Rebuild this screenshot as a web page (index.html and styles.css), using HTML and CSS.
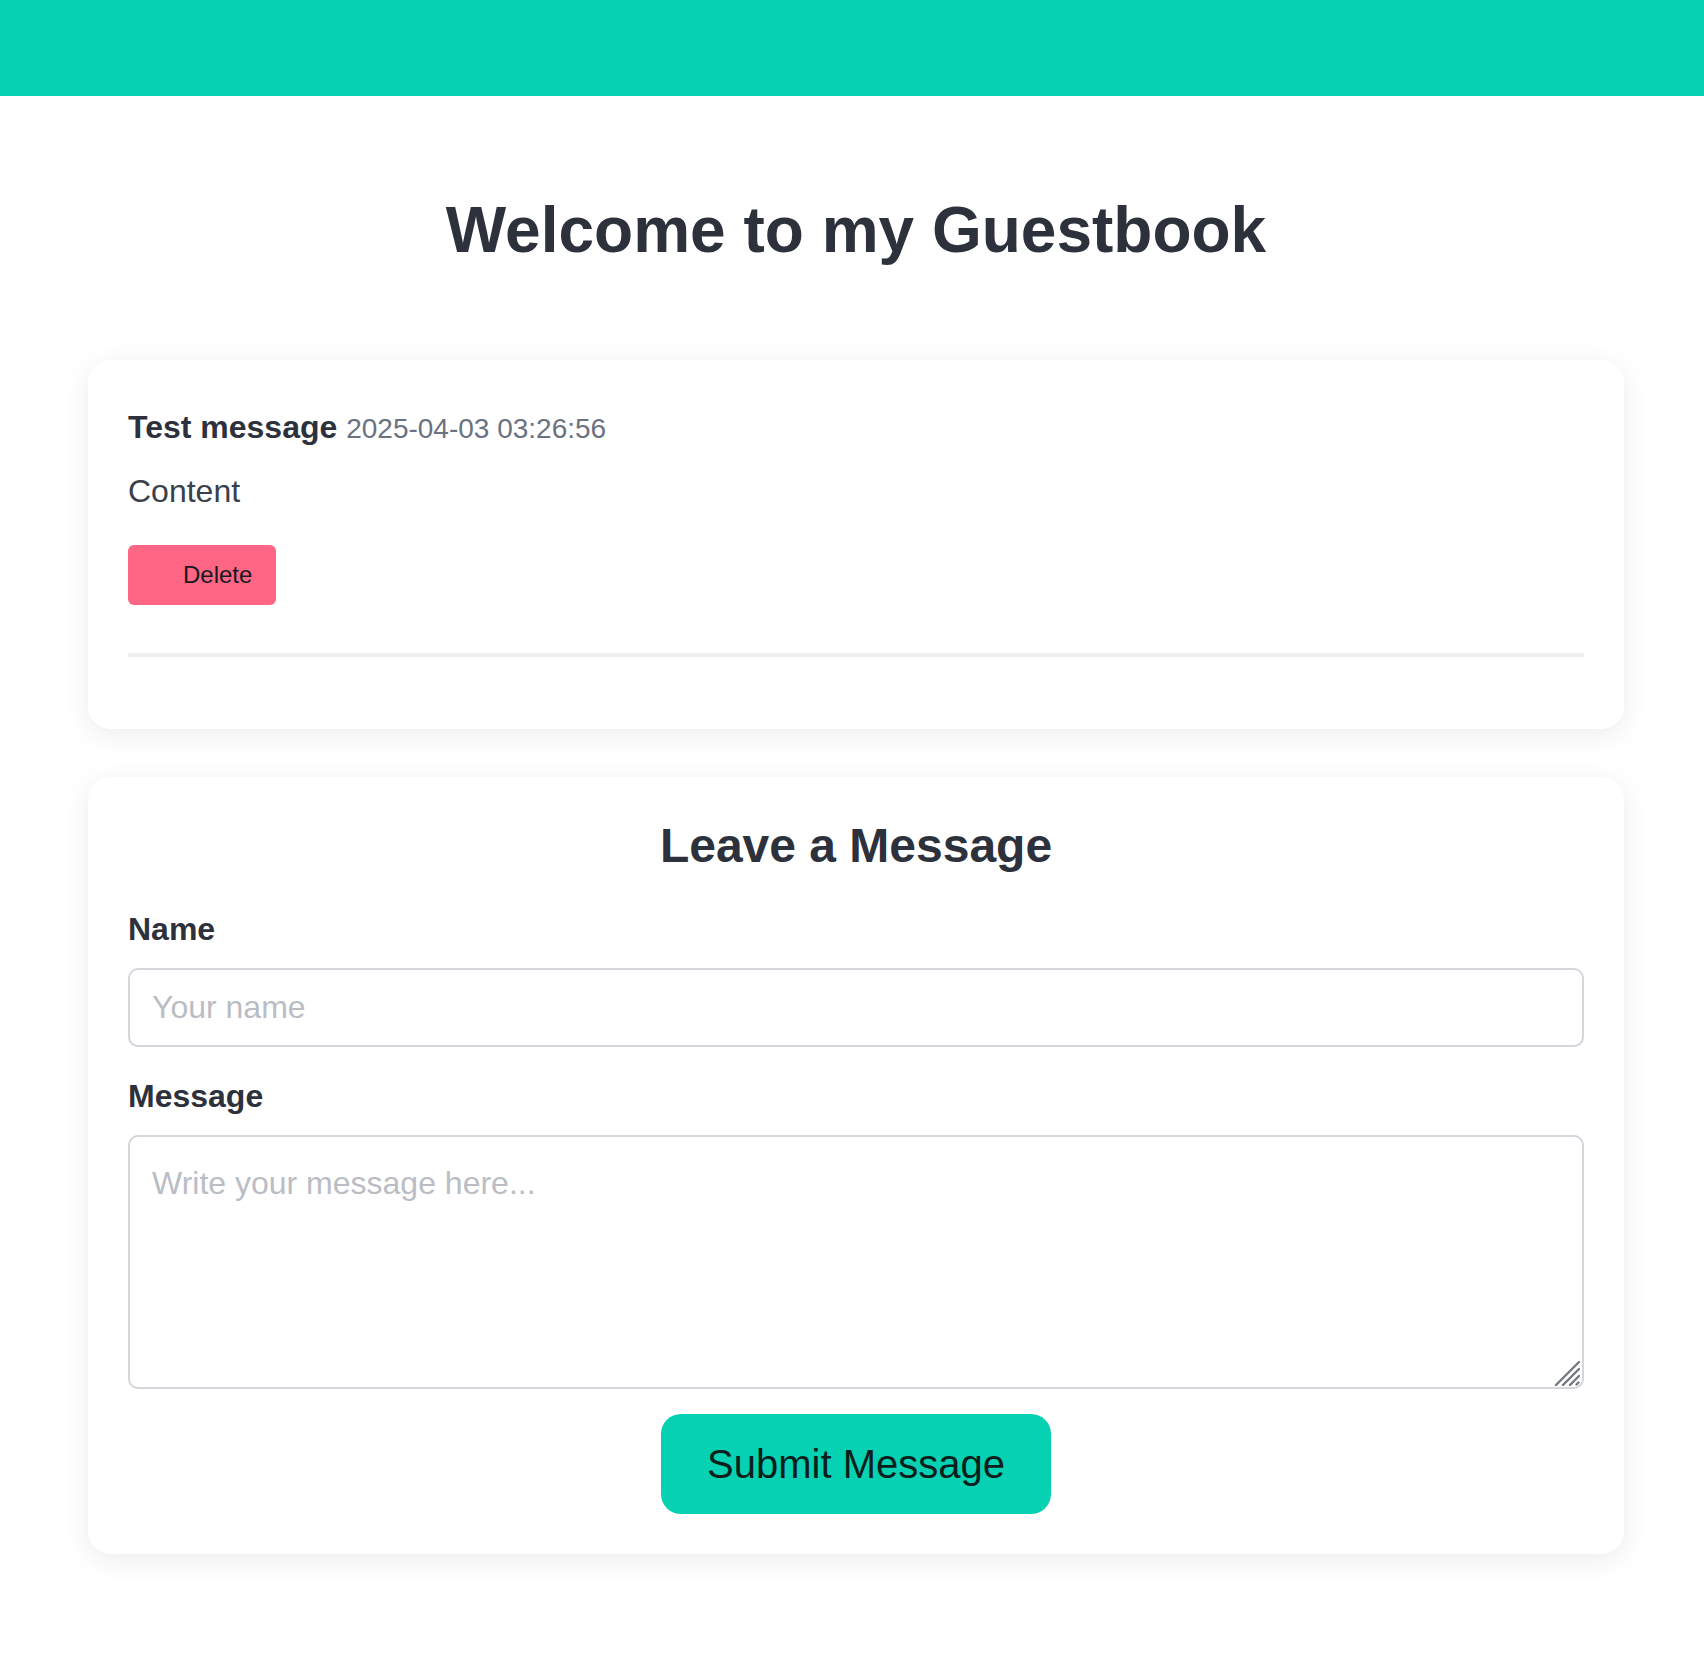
FILE: index.html
```html
<!DOCTYPE html>
<html lang="en">
<head>
<meta charset="utf-8">
<title>Guestbook</title>
<link rel="stylesheet" href="styles.css">
</head>
<body>
<header class="topbar"></header>
<main class="page">
  <h1 class="title">Welcome to my Guestbook</h1>

  <section class="card">
    <article class="entry">
      <div class="entry-meta"><strong class="entry-name">Test message</strong> <span class="entry-time">2025-04-03 03:26:56</span></div>
      <p class="entry-content">Content</p>
      <button class="btn-delete" type="button">Delete</button>
    </article>
  </section>

  <section class="card form-card">
    <h2 class="form-title">Leave a Message</h2>
    <form class="form">
      <label class="label" for="name">Name</label>
      <input class="field" id="name" type="text" placeholder="Your name">
      <label class="label label-gap" for="msg">Message</label>
      <div class="area-wrap">
        <textarea class="field area" id="msg" placeholder="Write your message here..."></textarea>
        <svg class="grip" width="26" height="26" viewBox="0 0 26 26" aria-hidden="true">
          <g stroke="#737782" stroke-width="2.4" stroke-linecap="round">
            <line x1="2" y1="25" x2="25" y2="2"/>
            <line x1="9" y1="25" x2="25" y2="9"/>
            <line x1="16" y1="25" x2="25" y2="16"/>
            <line x1="22.5" y1="24.5" x2="24.5" y2="22.5"/>
          </g>
        </svg>
      </div>
      <div class="actions">
        <button class="btn-submit" type="button">Submit Message</button>
      </div>
    </form>
  </section>
</main>
</body>
</html>
```

FILE: styles.css
```css
* { box-sizing: border-box; }

html, body {
  margin: 0;
  padding: 0;
  background: #ffffff;
}

body {
  font-family: "Liberation Sans", Arial, Helvetica, sans-serif;
  color: #2d313c;
}

.topbar {
  height: 96px;
  background: #06d1b2;
}

.page {
  padding: 0 80px 80px 88px;
}

.title {
  margin: 96px 0 91px;
  font-size: 64px;
  line-height: 77px;
  font-weight: 700;
  text-align: center;
  color: #2d313c;
}

.card {
  background: #ffffff;
  border-radius: 22px;
  padding: 40px;
  box-shadow: 0 6px 28px rgba(0, 0, 0, 0.075), 0 0 2px rgba(0, 0, 0, 0.03);
}

.entry {
  padding-bottom: 48px;
  margin-bottom: 32px;
  border-bottom: 4px solid #efefef;
}

.entry-meta {
  line-height: 54px;
  font-size: 32px;
}

.entry-name {
  font-weight: 700;
  color: #2d313c;
}

.entry-time {
  font-size: 28px;
  color: #6b7280;
}

.entry-content {
  margin: 11px 0 0;
  font-size: 32px;
  line-height: 48px;
  color: #3a404b;
}

.btn-delete {
  display: block;
  margin-top: 30px;
  height: 60px;
  padding: 0 24px 0 55px;
  border: 0;
  border-radius: 6px;
  background: #ff6584;
  color: #161a1f;
  font-family: "Liberation Sans", Arial, sans-serif;
  font-size: 24px;
}

.form-card {
  margin-top: 48px;
}

.form-title {
  margin: 0;
  font-size: 48px;
  line-height: 58px;
  font-weight: 700;
  text-align: center;
  color: #2d313c;
}

.form {
  display: flex;
  flex-direction: column;
  margin-top: 30px;
}

.label {
  display: block;
  font-size: 32px;
  line-height: 48px;
  font-weight: 700;
  color: #2d313c;
  margin-bottom: 15px;
}

.label-gap {
  margin-top: 25px;
}

.field {
  display: block;
  width: 100%;
  height: 79px;
  padding: 0 22px;
  border: 2px solid #d4d6dc;
  border-radius: 10px;
  background: #ffffff;
  font-family: "Liberation Sans", Arial, sans-serif;
  font-size: 32px;
  color: #2d313c;
  outline: none;
}

.field::placeholder {
  color: #babdc4;
}

.area-wrap {
  position: relative;
}

.area {
  height: 254px;
  padding: 22px 22px;
  line-height: 48px;
  resize: none;
}

.grip {
  position: absolute;
  right: 4px;
  bottom: 3px;
  pointer-events: none;
}

.actions {
  display: flex;
  justify-content: center;
  margin-top: 25px;
}

.btn-submit {
  height: 100px;
  padding: 0 46px;
  border: 0;
  border-radius: 20px;
  background: #06d1b2;
  color: #0a1f1c;
  font-family: "Liberation Sans", Arial, sans-serif;
  font-size: 40px;
}
```
